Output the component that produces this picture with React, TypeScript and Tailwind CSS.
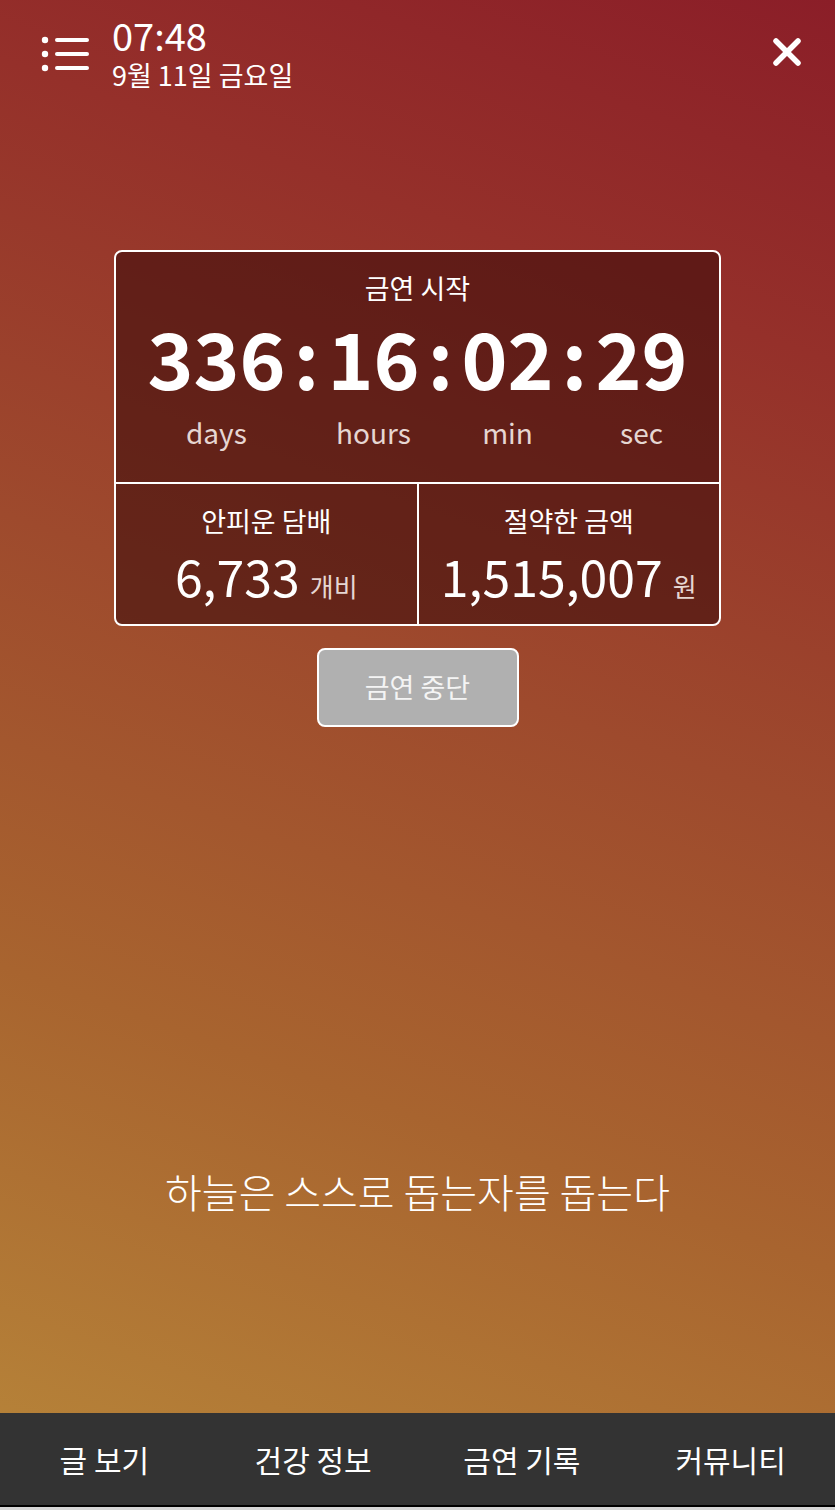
import React from 'react';

const font = { fontFamily: '"Noto Sans CJK KR", "Noto Sans", sans-serif' };

const ListIcon = () => (
  <svg width="50" height="44" viewBox="0 0 50 44" fill="none">
    <circle cx="5" cy="8" r="3.2" fill="white" />
    <circle cx="5" cy="22" r="3.2" fill="white" />
    <circle cx="5" cy="36" r="3.2" fill="white" />
    <line x1="17" y1="8" x2="47" y2="8" stroke="white" strokeWidth="4" strokeLinecap="round" />
    <line x1="17" y1="22" x2="47" y2="22" stroke="white" strokeWidth="4" strokeLinecap="round" />
    <line x1="17" y1="36" x2="47" y2="36" stroke="white" strokeWidth="4" strokeLinecap="round" />
  </svg>
);

const CloseIcon = () => (
  <svg width="32" height="32" viewBox="0 0 32 32" fill="none">
    <line x1="5" y1="5" x2="27" y2="27" stroke="white" strokeWidth="5.5" strokeLinecap="round" />
    <line x1="27" y1="5" x2="5" y2="27" stroke="white" strokeWidth="5.5" strokeLinecap="round" />
  </svg>
);

const units = [
  { value: '336', label: 'days' },
  { value: '16', label: 'hours' },
  { value: '02', label: 'min' },
  { value: '29', label: 'sec' },
];

const tabs = ['글 보기', '건강 정보', '금연 기록', '커뮤니티'];

export default function App() {
  return (
    <div
      style={font}
      className="flex h-[1510px] w-[835px] flex-col overflow-hidden bg-[linear-gradient(20deg,#b8873a_0%,#a8642f_30%,#9e4a2d_55%,#95302a_80%,#8b1e28_100%)] text-white"
    >
      {/* header */}
      <div className="flex h-[96px] items-start justify-between pl-[40px] pr-[32px] pt-[10px]">
        <div className="flex items-start gap-[22px]">
          <div className="pt-[22px]">
            <ListIcon />
          </div>
          <div className="flex flex-col">
            <span className="text-[38px] leading-[50px]">07:48</span>
            <span className="text-[27px] leading-[30px]">9월 11일 금요일</span>
          </div>
        </div>
        <div className="pt-[26px]">
          <CloseIcon />
        </div>
      </div>

      {/* counter card */}
      <div className="mx-auto mt-[154px] w-[607px] overflow-hidden rounded-[8px] border-2 border-white bg-[#3d0d0c]/60">
        <div className="flex h-[232px] flex-col items-center border-b-2 border-white pt-[18px]">
          <span className="text-[27px] leading-[36px]">금연 시작</span>
          <div className="mt-[6px] flex items-start">
            {units.map((u, i) => (
              <React.Fragment key={u.label}>
                {i > 0 && (
                  <span className="w-[42px] text-center text-[78px] font-bold leading-[88px]">:</span>
                )}
                <div className="flex flex-col items-center">
                  <span className="text-[78px] font-bold leading-[88px]">{u.value}</span>
                  <span className="mt-[15px] text-[28px] leading-[34px] text-[#e6d6d2]">{u.label}</span>
                </div>
              </React.Fragment>
            ))}
          </div>
        </div>
        <div className="flex h-[140px]">
          <div className="flex flex-1 flex-col items-center border-r-2 border-white pt-[20px]">
            <span className="text-[27px] leading-[34px]">안피운 담배</span>
            <div className="mt-[8px] flex items-baseline gap-[10px]">
              <span className="text-[50px] leading-[58px]">6,733</span>
              <span className="text-[26px] text-[#e6d6d2]">개비</span>
            </div>
          </div>
          <div className="flex flex-1 flex-col items-center pt-[20px]">
            <span className="text-[27px] leading-[34px]">절약한 금액</span>
            <div className="mt-[8px] flex items-baseline gap-[10px]">
              <span className="text-[50px] leading-[58px]">1,515,007</span>
              <span className="text-[26px] text-[#e6d6d2]">원</span>
            </div>
          </div>
        </div>
      </div>

      <button className="mx-auto mt-[22px] flex h-[79px] w-[202px] items-center justify-center rounded-[8px] border-2 border-white bg-[#b0b0b0] text-[27px] text-[#f4f4f4]">
        금연 중단
      </button>

      <div className="flex flex-1 items-end justify-center pb-[196px]">
        <span className="text-[40px] font-light leading-[52px]">하늘은 스스로 돕는자를 돕는다</span>
      </div>

      {/* bottom nav */}
      <div className="flex h-[92px] bg-[#333333]">
        {tabs.map((t) => (
          <div key={t} className="flex flex-1 items-center justify-center text-[30px]">
            {t}
          </div>
        ))}
      </div>
      <div className="h-[2px] bg-black" />
      <div className="h-[3px] bg-[#d6d6d6]" />
    </div>
  );
}
